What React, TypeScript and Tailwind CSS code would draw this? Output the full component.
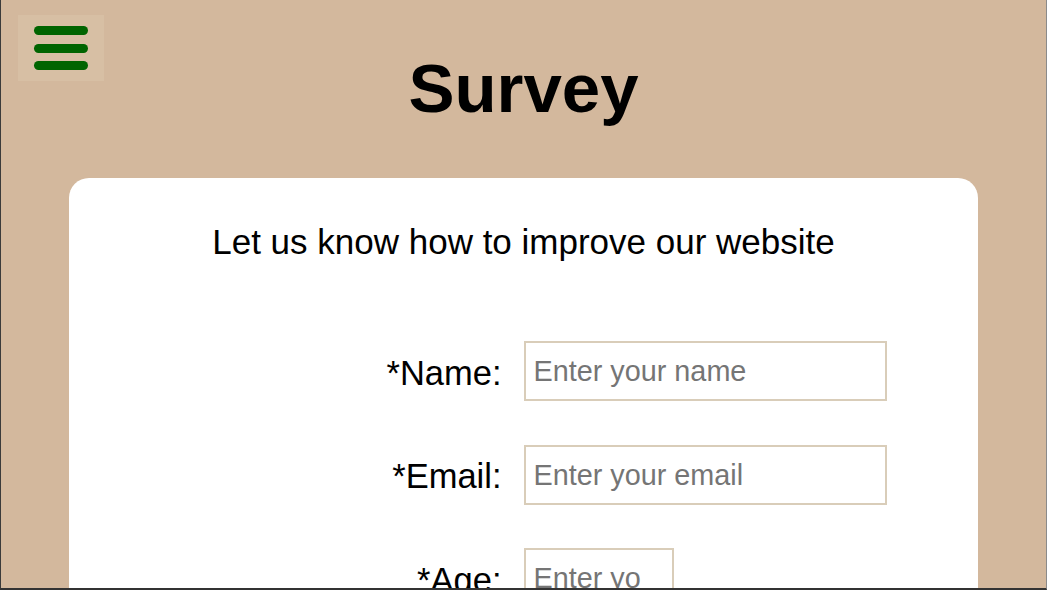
import React from "react";

const font = { fontFamily: '"Liberation Sans", Arial, sans-serif' };

function Row({ label, placeholder, w, pr }: { label: string; placeholder: string; w: string; pr: string }) {
  return (
    <div className="grid grid-cols-2 items-center mb-[43.5px]">
      <label className="text-right pr-[22px] pt-[5px] text-[34.5px] text-black leading-normal">{label}</label>
      <div>
        <input
          placeholder={placeholder}
          className={`${w} ${pr} h-[60px] border-2 border-[#d9cdb9] bg-white pl-[8px] pt-[1px] text-[28.8px] text-black placeholder:text-[#757575] outline-none`}
          style={font}
        />
      </div>
    </div>
  );
}

export default function App() {
  return (
    <div
      className="h-[590px] w-[1047px] overflow-hidden border-l border-r border-b-2 border-l-[#3a3a3a] border-r-[#8a8a8a] border-b-[#333] bg-[#d3b89d] relative"
      style={font}
    >
      <button className="absolute left-[17px] top-[15px] w-[86px] h-[66px] bg-[#d7bfa4] flex flex-col items-center justify-center gap-[8.5px]">
        <span className="block w-[54px] h-[9px] rounded-full bg-[#006400]" />
        <span className="block w-[54px] h-[9px] rounded-full bg-[#006400]" />
        <span className="block w-[54px] h-[9px] rounded-full bg-[#006400]" />
      </button>
      <h1 className="text-center font-bold text-[69px] leading-[79px] text-black pt-[49px]">Survey</h1>
      <div className="mx-[68px] mt-[50px] bg-white rounded-[20px] pt-[44px] pb-[40px]">
        <p className="text-center text-[35px] leading-[40px] text-black">Let us know how to improve our website</p>
        <div className="mt-[79px]">
          <Row label="*Name:" placeholder="Enter your name" w="w-[363px]" pr="pr-[8px]" />
          <Row label="*Email:" placeholder="Enter your email" w="w-[363px]" pr="pr-[8px]" />
          <Row label="*Age:" placeholder="Enter your age" w="w-[150px]" pr="pr-[31px]" />
        </div>
      </div>
    </div>
  );
}
